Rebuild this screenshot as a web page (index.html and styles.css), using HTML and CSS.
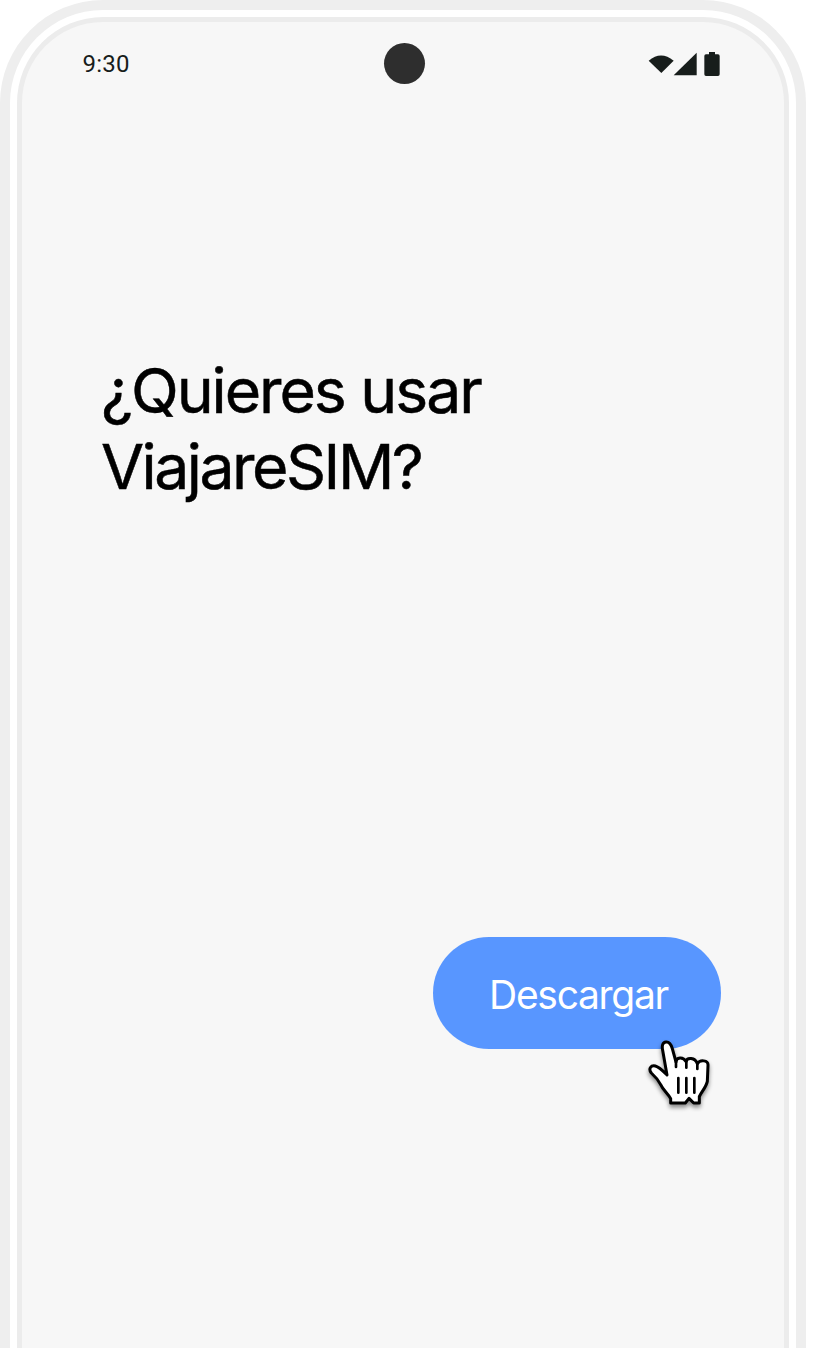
FILE: index.html
```
<!DOCTYPE html>
<html lang="es">
<head>
<meta charset="utf-8">
<title>ViajareSIM</title>
<link rel="stylesheet" href="styles.css">
</head>
<body>
<div class="phone">
  <main class="screen">
    <header class="status-bar">
      <span class="time">9:30</span>
      <span class="camera"></span>
      <svg class="indicators" viewBox="0 0 270 135" aria-hidden="true">
        <path d="M26 62Q63 31 101 62L64 99Z"/>
        <path d="M101 106L170 38V106Z"/>
        <path d="M207 36H225V43H234Q239 43 239 48V103Q239 108 234 108H198Q193 108 193 103V48Q193 43 198 43H207Z"/>
      </svg>
    </header>
    <h1 class="title"><span class="line first">¿Quieres usar</span><span class="line second">ViajareSIM?</span></h1>
    <div class="actions">
      <button class="download" type="button"><span class="label">Descargar</span></button>
      <svg class="cursor" viewBox="0 0 255 255" aria-hidden="true">
        <path d="M93 132L80 58C77 43 80 34 90 33C101 32 106 42 109 53L120 93C120 78 142 76 150 92C153 78 177 79 184 98C192 85 217 87 216 103L214 151C210 170 196 182 190 197V216H173L159 202L148 216H104V203C96 187 81 177 74 161C66 145 57 136 46 126C36 113 45 102 58 105C70 108 82 121 93 132Z"/>
        <path class="cuffs" d="M120 92V108M151 91V110M184 97V114M127 141V185M151 141V185M175 141V185"/>
      </svg>
    </div>
  </main>
</div>
</body>
</html>
```
FILE: styles.css
```
* { box-sizing: border-box; }
body { margin: 0; background: #fff; }
.phone {
  width: 806px;
  height: 1348px;
  padding: 7px 7px 0;
  border: 10px solid #eee;
  border-bottom: 0;
  border-radius: 103px 103px 0 0;
}
.screen {
  height: 100%;
  border: 5px solid #ececec;
  border-bottom: 0;
  border-radius: 86px 86px 0 0;
  background: #f7f7f7;
}
.status-bar {
  display: grid;
  grid-template-columns: 1fr 41px 1fr;
  align-items: center;
  height: 84px;
  padding: 0 54px 0 60px;
}
.time {
  padding-left: .5px;
  font: 400 24px/28px Roboto, sans-serif;
  letter-spacing: .2px;
  color: #171d1b;
}
.camera {
  width: 41px;
  height: 41px;
  margin: -1px 0 0 -2px;
  border-radius: 50%;
  background: #2e2e2e;
}
.indicators {
  justify-self: end;
  width: 90px;
  height: 45px;
  margin-top: -3px;
  fill: #171d1b;
}
.title {
  margin: 246px 0 0 79px;
  font: 400 62.5px/76px Inter, sans-serif;
  color: #000;
  -webkit-text-stroke: .5px #000;
}
.line { display: block; }
.first { letter-spacing: -2.05px; }
.second { letter-spacing: -2.5px; }
.actions {
  position: relative;
  display: flex;
  justify-content: flex-end;
  margin-top: 433px;
  padding-right: 63px;
}
.download {
  width: 288px;
  height: 112px;
  padding: 4px 0 0 3px;
  border: 0;
  border-radius: 56px;
  background: #5896ff;
  font: 400 39px/48px Inter, sans-serif;
  letter-spacing: -1.3px;
  color: #fff;
}
.cursor {
  position: absolute;
  top: 93.5px;
  left: 613.5px;
  width: 85px;
  height: 85px;
  fill: #fff;
  stroke: #000;
  stroke-width: 9;
  stroke-linejoin: round;
  filter: drop-shadow(0 3px 2px rgba(0, 0, 0, .45));
}
.cuffs { fill: none; stroke-linecap: round; stroke-width: 8; }
```
